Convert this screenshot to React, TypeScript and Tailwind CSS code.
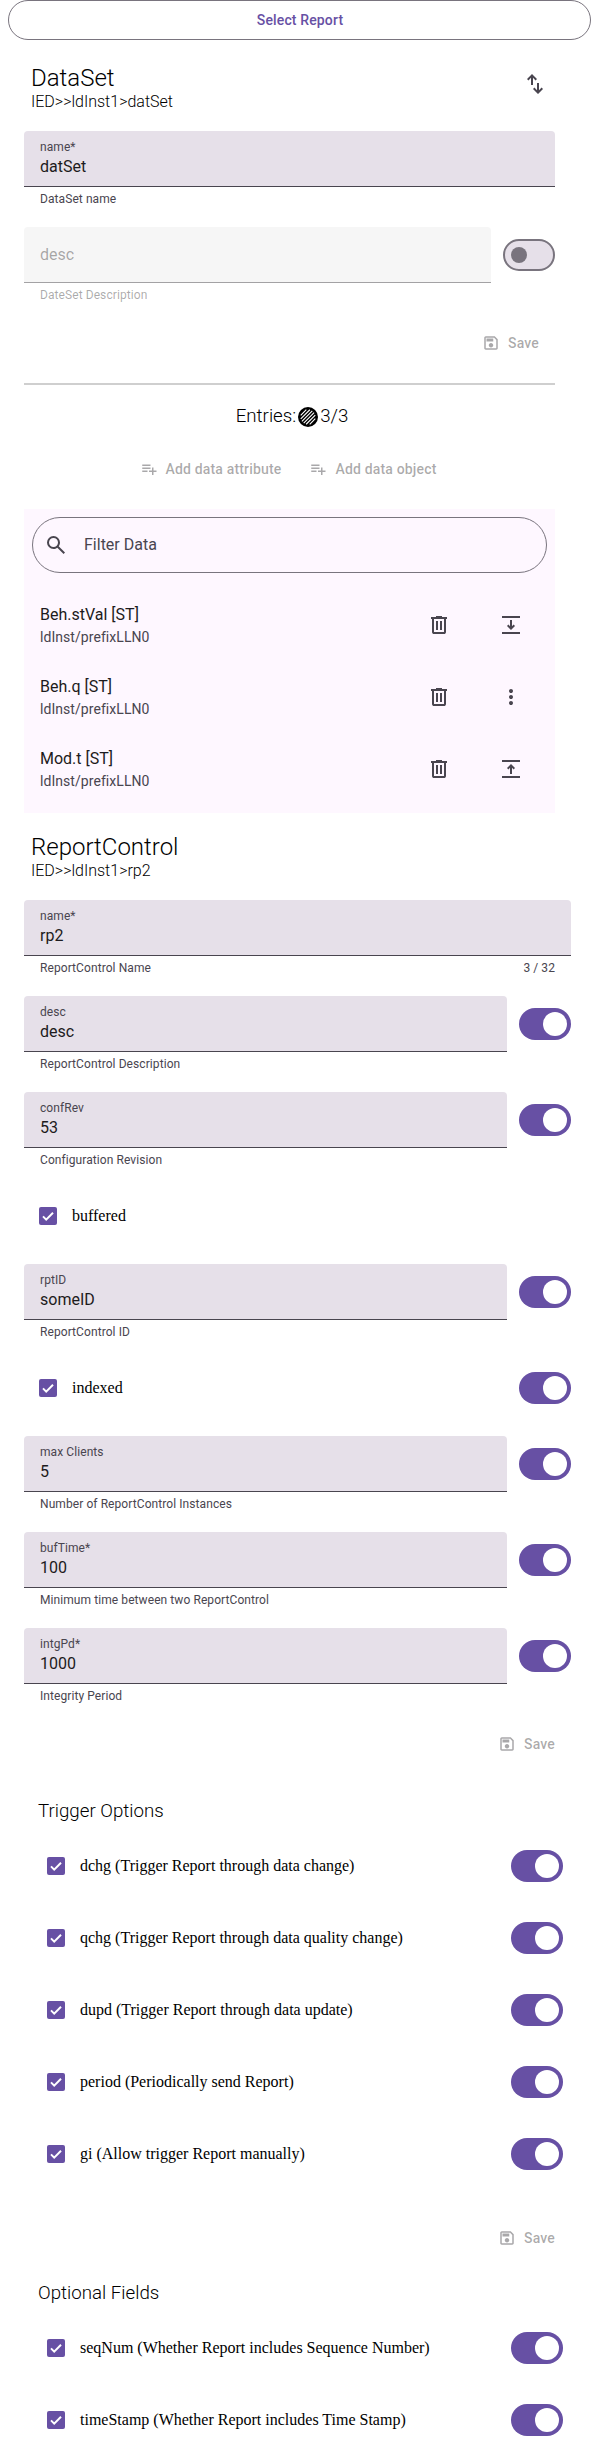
import React from "react";

const ICONS = {
  swap: "M320-440v-287L217-624l-57-56 200-200 200 200-57 56-103-103v287h-80ZM600-80 400-280l57-56 103 103v-287h80v287l103-103 57 56L600-80Z",
  save: "M840-680v480q0 33-23.500 56.500T760-120H200q-33 0-56.500-23.500T120-200v-560q0-33 23.500-56.500T200-840h480l160 160Zm-80 34L646-760H200v560h560v-446ZM480-240q50 0 85-35t35-85q0-50-35-85t-85-35q-50 0-85 35t-35 85q0 50 35 85t85 35ZM240-560h360v-160H240v160Zm-40-86v446-560 114Z",
  add: "M120-320v-80h280v80H120Zm0-160v-80h440v80H120Zm0-160v-80h440v80H120Zm520 480v-160H480v-80h160v-160h80v160h160v80H720v160h-80Z",
  search: "M784-120 532-372q-30 24-69 38t-83 14q-109 0-184.500-75.500T120-580q0-109 75.500-184.500T380-840q109 0 184.500 75.500T640-580q0 44-14 83t-38 69l252 252-56 56ZM380-400q75 0 127.500-52.500T560-580q0-75-52.500-127.500T380-760q-75 0-127.500 52.500T200-580q0 75 52.500 127.500T380-400Z",
  trash: "M280-120q-33 0-56.500-23.500T200-200v-520h-40v-80h200v-40h240v40h200v80h-40v520q0 33-23.500 56.500T680-120H280Zm400-600H280v520h400v-520ZM360-280h80v-360h-80v360Zm160 0h80v-360h-80v360ZM280-720v520-520Z",
  expandDown: "M120-120v-80h720v80H120ZM480-280 320-440l56-56 64 64v-248h80v248l64-64 56 56-160 160ZM120-760v-80h720v80H120Z",
  expandUp: "M120-120v-80h720v80H120ZM440-280v-248l-64 64-56-56 160-160 160 160-56 56-64-64v248h-80ZM120-760v-80h720v80H120Z",
  more: "M480-160q-33 0-56.500-23.500T400-240q0-33 23.500-56.500T480-320q33 0 56.500 23.500T560-240q0 33-23.500 56.500T480-160Zm0-240q-33 0-56.500-23.500T400-480q0-33 23.500-56.500T480-560q33 0 56.500 23.500T560-480q0 33-23.500 56.500T480-400Zm0-240q-33 0-56.500-23.500T400-720q0-33 23.500-56.500T480-800q33 0 56.500 23.500T560-720q0 33-23.500 56.500T480-640Z",
};

type IconName = keyof typeof ICONS;

function Icon({ name, className }: { name: IconName; className: string }) {
  return (
    <svg viewBox="0 -960 960 960" fill="currentColor" className={`shrink-0 ${className}`}>
      <path d={ICONS[name]} />
    </svg>
  );
}

function Toggle({ on = true }: { on?: boolean }) {
  return on ? (
    <div className="flex h-8 w-[52px] shrink-0 items-center justify-end rounded-full bg-[#6750a4] pr-1">
      <div className="size-6 rounded-full bg-white" />
    </div>
  ) : (
    <div className="flex h-8 w-[52px] shrink-0 items-center rounded-full border-2 border-[#79747e] bg-[#e6e0e9] pl-1.5">
      <div className="size-4 rounded-full bg-[#79747e]" />
    </div>
  );
}

function TextButton({ icon, label }: { icon: IconName; label: string }) {
  return (
    <div className="flex h-10 items-center gap-2 pr-4 pl-3 text-sm leading-5 font-medium tracking-[0.17px] text-[#1d1b20]/38">
      <Icon name={icon} className="size-[18px]" />
      <span>{label}</span>
    </div>
  );
}

type FieldProps = {
  label: string;
  value?: string;
  support: string;
  counter?: string;
  toggle?: "on" | "off";
};

function Field({ label, value, support, counter, toggle }: FieldProps) {
  const disabled = value === undefined;
  return (
    <div className="flex h-24 gap-3">
      <div className="min-w-0 flex-1">
        {disabled ? (
          <div className="flex h-14 items-center rounded-t border-b border-[#1d1b20]/38 bg-[#1d1b20]/4 px-4 text-base text-[#1d1b20]/38">
            {label}
          </div>
        ) : (
          <div className="h-14 rounded-t border-b border-[#49454f] bg-[#e6e0e9] px-4 pt-2">
            <div className="text-xs leading-4 tracking-[0.08px] text-[#49454f]">{label}</div>
            <div className="text-base leading-6 text-[#1d1b20]">{value}</div>
          </div>
        )}
        <div
          className={`flex justify-between px-4 pt-1 text-xs leading-4 tracking-[0.08px] ${disabled ? "text-[#1d1b20]/38" : "text-[#49454f]"}`}
        >
          <span>{support}</span>
          <span>{counter}</span>
        </div>
      </div>
      {toggle && (
        <div className="pt-3">
          <Toggle on={toggle === "on"} />
        </div>
      )}
    </div>
  );
}

function Check({ label, toggle = true }: { label: string; toggle?: boolean }) {
  return (
    <div className="flex h-14 items-center">
      <div className="ml-[15px] flex size-[18px] items-center justify-center rounded-[2px] bg-[#6750a4]">
        <svg viewBox="0 0 18 18" className="size-[18px]">
          <path d="M4 9.400 7.200 12.600 14 5.800" fill="none" stroke="#fff" strokeWidth="2" />
        </svg>
      </div>
      <span className="ml-[15px] flex-1 font-['Liberation_Serif',serif] text-base leading-6 text-black">{label}</span>
      {toggle && <Toggle />}
    </div>
  );
}

function Heading({ title, path, action }: { title: string; path: string; action?: IconName }) {
  return (
    <div className="flex h-[83px] justify-between pl-[7px] text-black">
      <div className="pt-4 font-light">
        <div className="text-2xl leading-7">{title}</div>
        <div className="text-base leading-5">{path}</div>
      </div>
      {action && <Icon name={action} className="mt-6 mr-2 size-6 text-[#49454f]" />}
    </div>
  );
}

const ENTRIES: { title: string; icon: IconName }[] = [
  { title: "Beh.stVal [ST]", icon: "expandDown" },
  { title: "Beh.q [ST]", icon: "more" },
  { title: "Mod.t [ST]", icon: "expandUp" },
];

const TRIGGERS = [
  "dchg (Trigger Report through data change)",
  "qchg (Trigger Report through data quality change)",
  "dupd (Trigger Report through data update)",
  "period (Periodically send Report)",
  "gi (Allow trigger Report manually)",
];

const OPTIONAL = [
  "seqNum (Whether Report includes Sequence Number)",
  "timeStamp (Whether Report includes Time Stamp)",
];

function CheckGroup({ title, items }: { title: string; items: string[] }) {
  return (
    <section className="px-2">
      <h3 className="mb-[15px] pt-px pl-1.5 text-[18.72px] leading-6 font-light text-black">{title}</h3>
      <div className="flex flex-col gap-4">
        {items.map((item) => (
          <Check key={item} label={item} />
        ))}
      </div>
    </section>
  );
}

function HatchedDot() {
  return (
    <svg viewBox="-2 -2 24 24" className="size-6">
      <circle cx="10" cy="10" r="10" fill="#000" />
      <path
        d="M2.700 8.300 8.300 2.700M2.750 11.850 11.850 2.750M3.900 14.300 14.300 3.900M5.700 16.100 16.100 5.700M8.150 17.250 17.250 8.150M11.700 17.300 17.300 11.700"
        stroke="#fff"
        strokeWidth="1.1"
      />
    </svg>
  );
}

export default function App() {
  return (
    <div className="h-[2448px] w-[599px] overflow-hidden bg-white font-[Roboto,sans-serif]">
      <div className="mx-2 flex h-10 items-center justify-center rounded-full border border-[#79747e] pl-px text-sm font-medium tracking-[0.14px] text-[#6750a4]">
        Select Report
      </div>

      <section className="mt-2 ml-6 w-[531px]">
        <Heading title="DataSet" path="IED>>ldInst1>datSet" action="swap" />
        <Field label="name*" value="datSet" support="DataSet name" />
        <Field label="desc" support="DateSet Description" toggle="off" />
        <div className="flex justify-end">
          <TextButton icon="save" label="Save" />
        </div>
        <div className="mt-5 h-0.5 bg-[#cfcfcf]" />
        <div className="mt-5 flex h-6 items-center justify-center pl-[5px] text-[18.72px] leading-6 font-light text-black">
          <span className="pb-[3px]">Entries:</span>
          <HatchedDot />
          <span className="pb-[3px]">3/3</span>
        </div>
        <div className="mt-5 flex justify-center pl-px">
          <TextButton icon="add" label="Add data attribute" />
          <TextButton icon="add" label="Add data object" />
        </div>
        <div className="mt-5 h-[304px] bg-[#fef7ff] p-2">
          <div className="flex h-14 items-center gap-4 rounded-full border border-[#79747e] pl-[11px] text-base text-[#49454f]">
            <Icon name="search" className="size-6" />
            <span>Filter Data</span>
          </div>
          <div className="mt-4">
            {ENTRIES.map(({ title, icon }) => (
              <div key={title} className="flex h-[72px] items-center pr-6 pl-2 text-[#49454f]">
                <div className="flex-1">
                  <div className="text-base leading-6 text-[#1d1b20]">{title}</div>
                  <div className="text-sm leading-5 tracking-[0.06px]">ldInst/prefixLLN0</div>
                </div>
                <Icon name="trash" className="mr-12 size-6" />
                <Icon name={icon} className="size-6" />
              </div>
            ))}
          </div>
        </div>
      </section>

      <section className="mt-1 ml-6 w-[547px]">
        <Heading title="ReportControl" path="IED>>ldInst1>rp2" />
        <Field label="name*" value="rp2" support="ReportControl Name" counter="3 / 32" />
        <Field label="desc" value="desc" support="ReportControl Description" toggle="on" />
        <Field label="confRev" value="53" support="Configuration Revision" toggle="on" />
        <div className="h-[76px]">
          <Check label="buffered" toggle={false} />
        </div>
        <Field label="rptID" value="someID" support="ReportControl ID" toggle="on" />
        <div className="h-[76px]">
          <Check label="indexed" />
        </div>
        <Field label="max Clients" value="5" support="Number of ReportControl Instances" toggle="on" />
        <Field label="bufTime*" value="100" support="Minimum time between two ReportControl" toggle="on" />
        <Field label="intgPd*" value="1000" support="Integrity Period" toggle="on" />
        <div className="mb-[34px] flex justify-end">
          <TextButton icon="save" label="Save" />
        </div>
        <CheckGroup title="Trigger Options" items={TRIGGERS} />
        <div className="mt-9 mb-[22px] flex justify-end">
          <TextButton icon="save" label="Save" />
        </div>
        <CheckGroup title="Optional Fields" items={OPTIONAL} />
      </section>
    </div>
  );
}
